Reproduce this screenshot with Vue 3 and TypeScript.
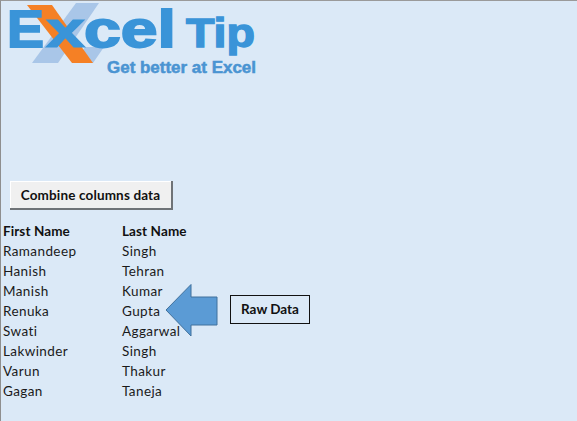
<script setup lang="ts">
const rows: [string, string][] = [
  ['Ramandeep', 'Singh'],
  ['Hanish', 'Tehran'],
  ['Manish', 'Kumar'],
  ['Renuka', 'Gupta'],
  ['Swati', 'Aggarwal'],
  ['Lakwinder', 'Singh'],
  ['Varun', 'Thakur'],
  ['Gagan', 'Taneja'],
]
</script>

<template>
  <main class="sheet">
    <svg class="logo" width="270" height="80" viewBox="0 0 270 80" role="img" aria-label="Excel Tip logo">
      <polygon points="75,2 98,2 57,62 31,62" fill="#a9c6e8" />
      <polygon points="84,46 103,46 92,62 74,62" fill="#a9c6e8" />
      <polygon points="26,4 51,4 92,62 71,62" fill="#f58025" />
      <text x="6" y="46" class="big" textLength="37" lengthAdjust="spacingAndGlyphs">E</text>
      <text x="45" y="46" class="mid" textLength="39" lengthAdjust="spacingAndGlyphs">x</text>
      <text x="83" y="46" class="big" textLength="92" lengthAdjust="spacingAndGlyphs">cel</text>
      <text x="185" y="46" class="tip" textLength="69" lengthAdjust="spacingAndGlyphs">Tip</text>
      <text x="106" y="72" class="tag" textLength="149" lengthAdjust="spacingAndGlyphs">Get better at Excel</text>
    </svg>

    <button class="combine" type="button">Combine columns data</button>

    <div class="table">
      <b>First Name</b><b>Last Name</b>
      <template v-for="r in rows" :key="r[0]">
        <span>{{ r[0] }}</span><span>{{ r[1] }}</span>
      </template>

      <svg class="arrow" width="54" height="54" viewBox="0 0 54 54" aria-hidden="true">
        <polygon points="1,26 26,0.5 26,13 52,13 52,41 26,41 26,52" fill="#5b9bd5" stroke="#41719c" stroke-width="1" />
      </svg>
      <div class="raw">Raw Data</div>
    </div>
  </main>
</template>

<style>
html, body { margin: 0; background: #dbe9f7; }
</style>

<style scoped>
.sheet {
  box-sizing: border-box;
  width: 577px;
  height: 421px;
  overflow: hidden;
  background: #dbe9f7;
  border-top: 1px solid #9a9a9a;
  border-left: 1px solid #8f8f8f;
  font-family: Lato, "Open Sans", sans-serif;
  color: #1a1a1a;
}
.logo { display: block; }
.big, .mid, .tip, .tag {
  font-family: "Liberation Sans", Arial, sans-serif;
  font-weight: 700;
  fill: #3a94d8;
  stroke: #3a94d8;
}
.big { font-size: 52px; stroke-width: 1.8px; }
.mid { font-size: 52px; stroke-width: 1.2px; }
.tip { font-size: 40px; stroke-width: 1.4px; }
.tag { font-size: 16px; fill: #4a94d2; stroke: #4a94d2; stroke-width: 0.5px; }
.combine {
  display: block;
  box-sizing: border-box;
  margin: 100px 0 0 9px;
  width: 163px;
  height: 29px;
  padding: 0;
  border: none;
  border-right: 2px solid #6f7377;
  border-bottom: 2px solid #6f7377;
  background: #f0f0f0;
  box-shadow: inset 1px 1px 0 #fff;
  font: 700 13.5px Lato, sans-serif;
  letter-spacing: 0.15px;
  color: #111;
}
.table {
  position: relative;
  display: grid;
  grid-template-columns: 119px 1fr;
  grid-auto-rows: 20px;
  margin: 11px 0 0 2px;
  font-size: 13.5px;
  line-height: 20px;
  letter-spacing: 0.4px;
}
.table b { font-weight: 700; letter-spacing: 0.1px; color: #111; }
.arrow { position: absolute; left: 162px; top: 63px; }
.raw {
  position: absolute;
  left: 227px;
  top: 74px;
  box-sizing: border-box;
  width: 80px;
  height: 29px;
  border: 1px solid #111;
  text-align: center;
  line-height: 27px;
  font-weight: 700;
  letter-spacing: 0;
  color: #111;
}
</style>
